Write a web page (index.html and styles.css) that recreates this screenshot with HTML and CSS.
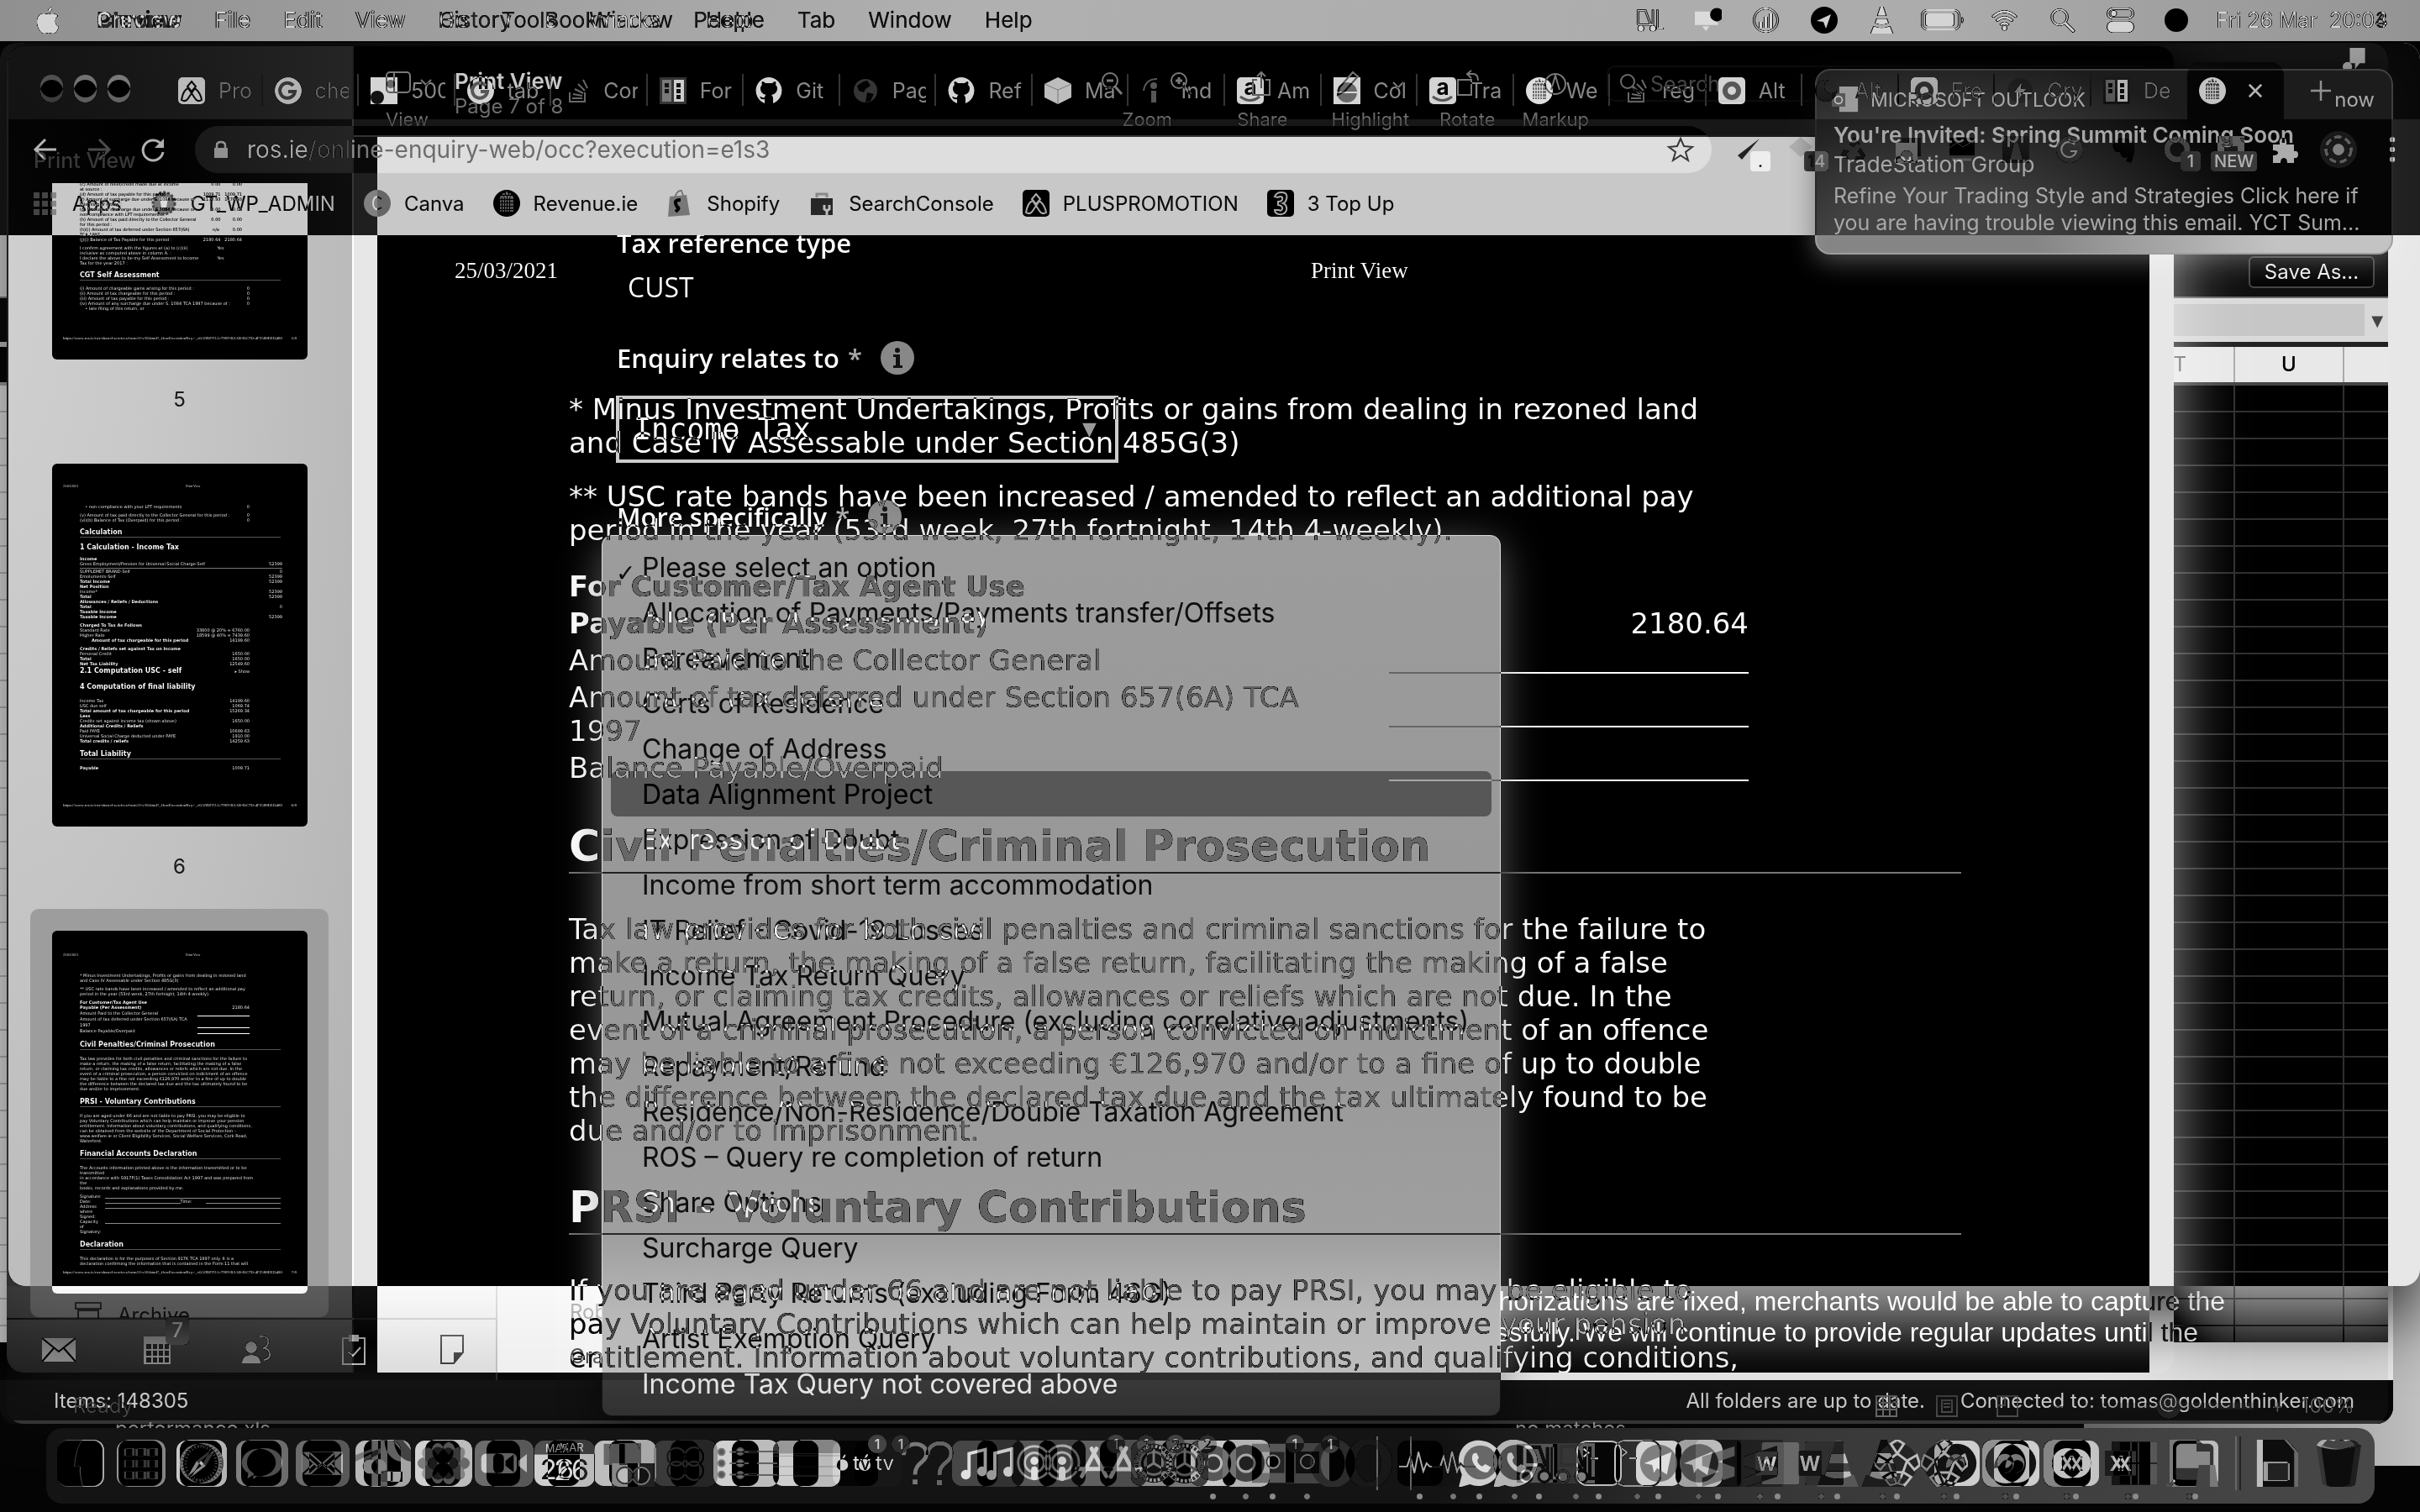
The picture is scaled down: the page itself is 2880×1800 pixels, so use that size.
FILE: index.html
```html
<!DOCTYPE html>
<html lang="en">
<head>
<meta charset="utf-8">
<title>Desktop</title>
<link rel="stylesheet" href="styles.css">
</head>
<body>
<svg class="defs" aria-hidden="true">
  <symbol id="finder" viewBox="0 0 56 56"><rect width="56" height="56" rx="12" fill="#888"/><path d="M30 0h14a12 12 0 0 1 12 12v32a12 12 0 0 1-12 12H31q-4-14-3-24h-7Q22 12 30 0z" fill="#ddd"/></symbol>
  <symbol id="launch" viewBox="0 0 56 56"><rect width="56" height="56" rx="12" fill="#b8b8b8"/><g fill="#777"><path d="M9 10h10v9H9zM23 10h10v9H23zM37 10h10v9H37zM9 38h10v9H9zM23 38h10v9H23zM37 38h10v9H37z"/></g><path d="M9 24h10v9H9zM23 24h10v9H23zM37 24h10v9H37z" fill="#eee"/></symbol>
  <symbol id="safari" viewBox="0 0 56 56"><rect width="56" height="56" rx="12" fill="#e8e8e8"/><circle cx="28" cy="28" r="24" fill="#777"/><circle cx="28" cy="28" r="21" fill="none" stroke="#ccc" stroke-width="3" stroke-dasharray="1 3"/><path d="M42 12 31 31l-6-6z" fill="#444"/><path d="M14 44l11-19 6 6z" fill="#fff"/></symbol>
  <symbol id="messages" viewBox="0 0 56 56"><rect width="56" height="56" rx="12" fill="#a0a0a0"/><path d="M28 10c13 0 21 8 21 17s-8 17-21 17l-8-1-6 4 1-7C10 37 7 33 7 27c0-9 8-17 21-17z" fill="#eee"/></symbol>
  <symbol id="mail" viewBox="0 0 56 56"><rect width="56" height="56" rx="12" fill="#8c8c8c"/><rect x="8" y="14" width="40" height="28" rx="4" fill="#eee"/><path d="M9 16l19 17 19-17M9 41l14-13M47 41L33 28" fill="none" stroke="#888" stroke-width="2"/></symbol>
  <symbol id="maps" viewBox="0 0 56 56"><rect width="56" height="56" rx="12" fill="#d8d8d8"/><path d="M20 0h8v56h-8zM36 0c0 14 8 24 20 26V12L46 0z" fill="#777"/><circle cx="18" cy="32" r="9" fill="#555"/><path d="M32 38h14v12H32z" fill="#333"/><path d="M0 18l20-8v6L0 26z" fill="#999"/></symbol>
  <symbol id="photos" viewBox="0 0 56 56"><rect width="56" height="56" rx="12" fill="#f0f0f0"/><g fill="#888" opacity=".8"><ellipse cx="28" cy="15" rx="8" ry="12"/><ellipse cx="28" cy="41" rx="8" ry="12"/><ellipse cx="15" cy="28" rx="12" ry="8"/><ellipse cx="41" cy="28" rx="12" ry="8"/><g transform="rotate(45 28 28)" fill="#aaa"><ellipse cx="28" cy="15" rx="8" ry="12"/><ellipse cx="28" cy="41" rx="8" ry="12"/><ellipse cx="15" cy="28" rx="12" ry="8"/><ellipse cx="41" cy="28" rx="12" ry="8"/></g></g></symbol>
  <symbol id="facetime" viewBox="0 0 56 56"><rect width="56" height="56" rx="12" fill="#8c8c8c"/><rect x="8" y="16" width="28" height="24" rx="6" fill="#eee"/><path d="M38 25l10-8v22l-10-8z" fill="#eee"/></symbol>
  <symbol id="calendar" viewBox="0 0 56 56"><path d="M12 0h32a12 12 0 0 1 12 12v5H0v-5A12 12 0 0 1 12 0z" fill="#707070"/><path d="M0 17h56v27a12 12 0 0 1-12 12H12A12 12 0 0 1 0 44z" fill="#eee"/><text x="28" y="14" text-anchor="middle" font-size="13" fill="#fff">MAR</text><text x="28" y="48" text-anchor="middle" font-size="34" fill="#111">26</text></symbol>
  <symbol id="iphoto" viewBox="0 0 56 56"><rect width="56" height="56" rx="12" fill="#ddd"/><path d="M12 4h26v26H12z" fill="#888"/><path d="M22 28h32v30H22z" fill="#555"/><circle cx="38" cy="43" r="10" fill="#222" stroke="#aaa" stroke-width="2"/></symbol>
  <symbol id="dark" viewBox="0 0 56 56"><rect width="56" height="56" rx="12" fill="#5a5a5a"/><circle cx="28" cy="20" r="11" fill="none" stroke="#333" stroke-width="2"/><circle cx="28" cy="37" r="11" fill="none" stroke="#333" stroke-width="2"/></symbol>
  <symbol id="reminders" viewBox="0 0 56 56"><rect width="56" height="56" rx="12" fill="#f0f0f0"/><g fill="#777" stroke="#999" stroke-width="2"><circle cx="10" cy="14" r="4"/><circle cx="10" cy="28" r="4"/><circle cx="10" cy="42" r="4"/><path d="M20 14h34M20 28h34M20 42h34"/></g></symbol>
  <symbol id="notes" viewBox="0 0 56 56"><rect width="56" height="56" rx="12" fill="#eee"/><path d="M12 0h32a12 12 0 0 1 12 12v4H0v-4A12 12 0 0 1 12 0z" fill="#b8b8b8"/><path d="M0 19h56M0 32h56M0 43h56" stroke="#bbb"/></symbol>
  <symbol id="tv" viewBox="0 0 56 56"><rect width="56" height="56" rx="12" fill="#1c1c1c"/><circle cx="12" cy="30" r="7" fill="#eee"/><path d="M12 22q1-5 4-5 0 4-4 5z" fill="#eee"/><text x="36" y="36" text-anchor="middle" font-size="24" fill="#fff">tv</text></symbol>
  <symbol id="ask" viewBox="0 0 56 56"><path d="M14 18C14 0 42 0 42 16c0 12-14 10-14 26" fill="none" stroke="#999" stroke-width="5"/><path d="M25 48h6v6h-6z" fill="#999"/></symbol>
  <symbol id="music" viewBox="0 0 56 56"><rect width="56" height="56" rx="12" fill="#666"/><path d="M21 42V16l20-5v26" fill="none" stroke="#fff" stroke-width="4"/><circle cx="17" cy="42" r="6" fill="#fff"/><circle cx="37" cy="38" r="6" fill="#fff"/></symbol>
  <symbol id="podcasts" viewBox="0 0 56 56"><rect width="56" height="56" rx="12" fill="#777"/><circle cx="28" cy="27" r="20" fill="none" stroke="#ddd" stroke-width="3"/><circle cx="28" cy="27" r="12" fill="none" stroke="#ddd" stroke-width="3"/><circle cx="28" cy="25" r="5" fill="#fff"/><rect x="24" y="32" width="8" height="17" rx="4" fill="#fff"/></symbol>
  <symbol id="store" viewBox="0 0 56 56"><rect width="56" height="56" rx="12" fill="#808080"/><path d="M31 10 13 44M25 10l18 34M7 35h42" stroke="#eee" stroke-width="5" stroke-linecap="round"/></symbol>
  <symbol id="gear" viewBox="0 0 56 56"><rect width="56" height="56" rx="12" fill="#aaa"/><circle cx="28" cy="28" r="24" fill="#333"/><circle cx="28" cy="28" r="21" fill="none" stroke="#bbb" stroke-width="4" stroke-dasharray="3 2"/><circle cx="28" cy="28" r="14" fill="none" stroke="#888" stroke-width="3"/><path d="M28 28V10M28 28l15 9M28 28l-15 9" stroke="#999" stroke-width="3"/></symbol>
  <symbol id="viewer" viewBox="0 0 56 56"><rect width="56" height="56" rx="10" fill="#e8e8e8"/><circle cx="28" cy="28" r="22" fill="#777"/><circle cx="28" cy="28" r="10" fill="#555" stroke="#ddd" stroke-width="3"/></symbol>
  <symbol id="board" viewBox="0 0 56 56"><path d="M2 4h52v48H2z" fill="#777"/><path d="M14 14h28v26H14z" fill="#444"/><circle cx="28" cy="26" r="8" fill="#222" stroke="#aaa" stroke-width="2"/></symbol>
  <symbol id="opera" viewBox="0 0 56 56"><ellipse cx="28" cy="28" rx="28" ry="30" fill="#4c4c4c"/><ellipse cx="28" cy="28" rx="15" ry="22" fill="#222"/></symbol>
  <symbol id="activity" viewBox="0 0 56 56"><rect width="56" height="56" rx="12" fill="#222"/><path d="M2 32h10l4-12 5 20 5-26 6 24 4-10 4 4h14" fill="none" stroke="#ccc" stroke-width="2"/></symbol>
  <symbol id="whats" viewBox="0 0 56 56"><path d="M2 58l4-16C-6 14 12-3 30 0c18 2 28 18 24 34C49 52 30 60 16 54z" fill="#eee"/><circle cx="29" cy="27" r="21" fill="#888"/><path d="M20 16c-6 10 8 25 18 23l4-6-7-4-4 3c-4-2-6-5-6-8l2-3-3-6z" fill="#fff"/></symbol>
  <symbol id="lift" viewBox="0 0 56 56"><rect y="4" width="50" height="48" fill="#777"/><path d="M8 30h22l8 12V8M10 8h18l8 24M10 8v24M44 8v38h10" fill="none" stroke="#111" stroke-width="4"/><circle cx="12" cy="44" r="7" fill="#999" stroke="#111" stroke-width="3"/><circle cx="34" cy="44" r="7" fill="#999" stroke="#111" stroke-width="3"/></symbol>
  <symbol id="term" viewBox="0 0 56 56"><rect x="1" y="1" width="54" height="54" rx="12" fill="#1a1a1a" stroke="#ddd" stroke-width="2"/><path d="M9 10l6 5-6 5M18 22h9" fill="none" stroke="#eee" stroke-width="2"/></symbol>
  <symbol id="tele" viewBox="0 0 56 56"><rect width="56" height="56" rx="12" fill="#eee"/><circle cx="28" cy="28" r="23" fill="#999"/><path d="M10 28l34-14-6 28-12-8-4 6-2-10z" fill="#fff"/></symbol>
  <symbol id="sublime" viewBox="0 0 56 56"><rect y="-2" width="56" height="60" rx="8" fill="#333"/><path d="M8 20l40-13v12L28 26l20 7v11L8 57V46l21-8L8 31z" fill="#777"/></symbol>
  <symbol id="word" viewBox="0 0 56 56"><rect x="8" y="2" width="46" height="52" rx="3" fill="#888"/><rect y="13" width="28" height="30" rx="2" fill="#444"/><text x="14" y="37" text-anchor="middle" font-size="24" font-weight="700" fill="#fff">W</text></symbol>
  <symbol id="vlc" viewBox="0 0 56 56"><path d="M2 58l6-16h40l6 16z" fill="#777"/><path d="M26-2h6l13 44q-17 8-33 0z" fill="#666"/><path d="M20 16h17l4 12H17zM14 38h29l2 5q-17 8-33 0z" fill="#ddd"/></symbol>
  <symbol id="ball" viewBox="0 0 56 56"><circle cx="28" cy="28" r="25" fill="#444"/><path d="M28 16l12 9-5 14H21l-5-14zM28 16L20 4 28-1 36 4zM40 25l12-7 4 12-7 6zM35 39l10 6-8 10-8-2zM21 39l-10 6 8 10 8-2zM16 25L4 18 0 30l7 6z" fill="none" stroke="#ddd" stroke-width="3"/></symbol>
  <symbol id="swirl" viewBox="0 0 56 56"><rect width="56" height="56" rx="12" fill="#eee"/><circle cx="28" cy="28" r="24" fill="#333"/><path d="M14 34C14 16 30 12 36 22c5 9-2 18-10 18 12-2 14-14 4-16-8-1-8 10-16 10z" fill="#aaa"/></symbol>
  <symbol id="xround" viewBox="0 0 56 56"><rect width="56" height="56" rx="12" fill="#e4e4e4"/><circle cx="28" cy="28" r="18" fill="#222"/><text x="28" y="37" text-anchor="middle" font-size="24" font-weight="700" fill="#ccc">X</text></symbol>
  <symbol id="excel" viewBox="0 0 56 56"><rect x="8" y="2" width="46" height="52" fill="#777"/><path d="M31 2v52M8 28h46" stroke="#444" stroke-width="2"/><rect y="13" width="28" height="30" fill="#444"/><text x="14" y="37" text-anchor="middle" font-size="24" font-weight="700" fill="#fff">X</text></symbol>
  <symbol id="sheet" viewBox="0 0 56 56"><path d="M4-2h32l16 16v44H4z" fill="#ddd"/><path d="M36-2v16h16z" fill="#888"/><path d="M10 48l-8 10M2 52v6h6" stroke="#111" stroke-width="3"/></symbol>
  <symbol id="preview" viewBox="0 0 56 56"><rect width="56" height="56" rx="8" fill="#ddd"/><rect x="4" y="4" width="46" height="44" rx="6" fill="#555"/><path d="M4 34h46v14H4z" fill="#aaa"/><path d="M32 30h20l4 28H28z" fill="#999"/></symbol>
  <symbol id="doc" viewBox="0 0 56 56"><path d="M4-3h32l14 16v46H4z" fill="#ddd"/><path d="M12 26h30v24H12z" fill="#333"/></symbol>
  <symbol id="doc-dim" viewBox="0 0 56 56"><path d="M8-1h28l14 16v44H8z" fill="#d0d0d0"/><path d="M14 28h26v20H14z" fill="#555"/></symbol>
  <symbol id="bin" viewBox="0 0 56 56"><path d="M4 6h48l-7 48q-17 8-34 0z" fill="#555"/><path d="M4 6q6-10 14-6 8-6 16 0 12-4 18 6-24 10-48 0z" fill="#ccc"/></symbol>
  <symbol id="bin-dim" viewBox="0 0 56 56"><path d="M4 6h48l-7 48q-17 8-34 0z" fill="#484848"/><path d="M6 7q5-10 13-5 8-6 14 0 12-4 17 5-22 8-44 0z" fill="#888"/></symbol>

  <symbol id="apple" viewBox="0 0 26 32"><path d="M18 8c3 0 5 1 7 3-5 3-4 11 1 13-2 5-4 8-7 8-2 0-3-1-5-1s-3 1-5 1c-5 0-9-8-9-14 0-7 4-10 8-10 2 0 4 1 6 1 1 0 2-1 4-1zM18 0c0 4-2 6-5 7 0-4 2-6 5-7z"/></symbol>
  <symbol id="wifi" viewBox="0 0 34 26"><path d="M2 9q15-14 30 0M7 14q10-9 20 0M12 19q5-5 10 0" fill="none" stroke="currentColor" stroke-width="3"/><circle cx="17" cy="23" r="3"/></symbol>
  <symbol id="search" viewBox="0 0 28 28"><circle cx="11" cy="11" r="8" fill="none" stroke="currentColor" stroke-width="2"/><path d="M17 17l9 9" stroke="currentColor" stroke-width="3"/></symbol>
  <symbol id="toggles" viewBox="0 0 28 28"><rect x="1" y="2" width="26" height="10" rx="5" fill="none" stroke="currentColor" stroke-width="2"/><circle cx="7" cy="7" r="3"/><rect y="15" width="28" height="12" rx="6"/></symbol>
  <symbol id="battery" viewBox="0 0 52 26"><rect x="1" y="1" width="44" height="23" rx="6" fill="none" stroke="currentColor" stroke-width="2"/><rect x="5" y="5" width="34" height="15" rx="3"/><path d="M48 9q4 3 0 8z"/></symbol>
  <symbol id="cone" viewBox="0 0 32 36"><path d="M14 0h4l4 12H10zM9 16h14l2 6q-9 4-18 0zM5 26q11 5 22 0l4 10H1z"/></symbol>
  <symbol id="bars" viewBox="0 0 32 32"><circle cx="16" cy="16" r="14" fill="none" stroke="currentColor" stroke-width="2"/><path d="M8 18h4v7H8zM14 12h4v13h-4zM20 8h4v17h-4z"/></symbol>
  <symbol id="plane" viewBox="0 0 32 32"><circle cx="16" cy="16" r="16" fill="#242424"/><path d="M7 17l17-8-6 17-3-8z" fill="#f4f4f4"/></symbol>
  <symbol id="truck" viewBox="0 0 36 32"><path d="M2 22V3h10l7 19M2 22h20V2M28 2v25h8" fill="none" stroke="currentColor" stroke-width="2"/><circle cx="6" cy="27" r="4"/><circle cx="22" cy="27" r="4"/></symbol>
  <symbol id="bell" viewBox="0 0 44 36"><path d="M0 4h24q2 16 14 18v4H0zM12 28h12l-6 8z" fill="#fff"/><circle cx="36" cy="9" r="11" fill="#242424"/></symbol>

  <symbol id="g" viewBox="0 0 32 32"><circle cx="16" cy="16" r="16" fill="#f4f4f4"/><path d="M22 10a9 9 0 1 0 2 7h-8" fill="none" stroke="#777" stroke-width="4"/></symbol>
  <symbol id="aframe" viewBox="0 0 32 32"><rect width="32" height="32" rx="5" fill="#f4f4f4"/><path d="M16 5l5 6-5 6-5-6zM4 27q2-12 8-14l8 12q3 5 8 2-1-8-8-14l-8 12q-3 5-8 2z" fill="none" stroke="#444" stroke-width="2"/></symbol>
  <symbol id="pic" viewBox="0 0 32 32"><rect width="32" height="32" fill="#f4f4f4"/><circle cx="8" cy="24" r="8" fill="#333"/><circle cx="24" cy="8" r="5" fill="#888"/></symbol>
  <symbol id="stack" viewBox="0 0 32 32"><path d="M8 18v11h18V18M11 25h12M12 20l11 2M14 14l10 5M18 8l8 8M24 3l5 10" fill="none" stroke="#888" stroke-width="2"/></symbol>
  <symbol id="cells" viewBox="0 0 32 32"><rect width="32" height="32" fill="#555"/><path d="M3 3h11v26H3z" fill="#999"/><path d="M17 3h12v26H17z" fill="#eee"/><path d="M20 7h5v5h-5zM20 14h5v5h-5zM20 21h5v5h-5zM6 7h5v5H6zM6 14h5v5H6z" fill="#333"/></symbol>
  <symbol id="cat" viewBox="0 0 32 32"><path d="M16 0a16 16 0 0 0-5 31v-5c-4 1-5-1-6-3 3 0 3 2 6 1 0-2 1-3 2-3-5-1-7-4-7-8 0-2 1-3 2-4-1-2 0-4 0-4 2 0 4 2 4 2h8s2-2 4-2c0 0 1 2 0 4 1 1 2 2 2 4 0 4-2 7-7 8 1 1 2 2 2 4v6A16 16 0 0 0 16 0z" fill="#f4f4f4"/></symbol>
  <symbol id="globe" viewBox="0 0 32 32"><circle cx="16" cy="16" r="14" fill="#555"/><path d="M6 10q8-6 12-6l4 6-6 4-2 4-6-2zM18 18l8 2-4 8-6 2z" fill="#222"/></symbol>
  <symbol id="cube" viewBox="0 0 32 32"><path d="M16 0l16 8v16l-16 8L0 24V8z" fill="#ddd"/><path d="M0 8l16 7 16-7M16 15v17" fill="none" stroke="#999"/></symbol>
  <symbol id="ind" viewBox="0 0 32 32"><circle cx="16" cy="10" r="4" fill="#777"/><path d="M13 16h6v14h-6z" fill="#777"/><path d="M4 16Q6 2 20 2" fill="none" stroke="#777" stroke-width="2"/></symbol>
  <symbol id="amazon" viewBox="0 0 32 32"><rect width="32" height="32" rx="5" fill="#f4f4f4"/><text x="16" y="21" text-anchor="middle" font-size="26" font-weight="700" fill="#222">a</text><path d="M4 23q12 9 23 0" fill="none" stroke="#777" stroke-width="3"/></symbol>
  <symbol id="globe2" viewBox="0 0 32 32"><rect width="32" height="32" fill="#f4f4f4"/><circle cx="16" cy="18" r="12" fill="#888"/><path d="M4 18h24" stroke="#f4f4f4" stroke-width="2"/></symbol>
  <symbol id="harp" viewBox="0 0 32 32"><circle cx="16" cy="16" r="16" fill="#fff"/><path d="M9 8h14M11 5h10M16 2v4M9 8v18M12 8v18M15 8v18M18 8v18M21 8v18M23 8v18" stroke="#222" stroke-dasharray="3 1"/></symbol>
  <symbol id="ring" viewBox="0 0 32 32"><rect width="32" height="32" rx="5" fill="#f4f4f4"/><circle cx="16" cy="16" r="8" fill="none" stroke="#777" stroke-width="6"/></symbol>
  <symbol id="moon" viewBox="0 0 32 32"><circle cx="14" cy="16" r="13" fill="#666"/><circle cx="20" cy="11" r="8" fill="#222"/></symbol>
  <symbol id="bolt" viewBox="0 0 32 32"><circle cx="16" cy="16" r="15" fill="#2a2a2a"/><path d="M18 6l-9 12h6l-1 9 9-13h-6z" fill="#bbb"/></symbol>
  <symbol id="info" viewBox="0 0 40 40"><circle cx="20" cy="20" r="20" fill="#777"/><circle cx="20" cy="11" r="3" fill="#eee"/><path d="M15 16h8v13h3v3H15v-3h3V19h-3z" fill="#eee"/></symbol>
</svg>

<main class="stage">
  <!-- browser and mail session -->
  <section class="screen screen-one">
    <div class="paper-edge"></div>
    <div class="mail">
      <div class="mail-main">
        <div class="mail-side">
          <div class="folder"><svg viewBox="0 0 30 24"><path d="M0 0h30v7H0zM3 9h24v15H3z" fill="none" stroke="#777" stroke-width="2"/></svg>Archive</div>
          <nav class="mail-nav">
            <svg viewBox="0 0 40 40"><path d="M0 6h40v28H0z" fill="#d8d8d8"/><path d="M0 6l20 16L40 6M0 34l14-16M40 34L26 18" fill="none" stroke="#444" stroke-width="2"/></svg>
            <span class="with-badge"><svg viewBox="0 0 40 40"><path d="M4 4h32v33H4z" fill="#d8d8d8"/><path d="M7 13h6v6H7zM15 13h5v6h-5zM22 13h5v6h-5zM29 13h5v6h-5zM7 21h6v6H7zM15 21h5v6h-5zM22 21h5v6h-5zM29 21h5v6h-5zM7 29h6v6H7zM15 29h5v6h-5zM22 29h5v6h-5zM29 29h5v6h-5z" fill="#333"/></svg><b>7</b></span>
            <svg viewBox="0 0 40 40"><circle cx="15" cy="17" r="7" fill="#d8d8d8"/><path d="M4 36q0-10 11-10t11 10z" fill="#d8d8d8"/><path d="M25 4q12-1 10 8-1 5-6 6 8 0 8 8 0 5-7 6" fill="none" stroke="#d8d8d8" stroke-width="2"/></svg>
            <svg viewBox="0 0 40 40"><path d="M7 6h26v31H7z" fill="none" stroke="#d8d8d8" stroke-width="2"/><path d="M14 2h12v8H14z" fill="#d8d8d8"/><path d="M13 22l6 5 9-10" fill="none" stroke="#d8d8d8" stroke-width="2"/></svg>
            <svg viewBox="0 0 40 40"><path d="M7 3h26v20L22 36H7z" fill="none" stroke="#ccc" stroke-width="2"/><path d="M22 36V23h11z" fill="#ccc"/></svg>
          </nav>
        </div>
        <div class="mail-list"><p>Robert</p><p>Gra</p></div>
        <article class="mail-body">
          <p>Once card authorizations are fixed, merchants would be able to capture the</p>
          <p>payments successfully. We will continue to provide regular updates until the</p>
        </article>
      </div>
      <footer class="mail-status"><span>Items: 148305</span><span class="push">All folders are up to date.</span><span>Connected to: tomas@goldenthinker.com</span></footer>
    </div>
    <div class="peek"><span class="peek-file">performance.xls</span><span>no matches</span></div>

    <div class="chrome">
      <div class="tabstrip">
        <div class="lights"><i></i><i></i><i></i></div>
        <div class="tabs">
          <div class="tab"><svg><use href="#aframe"/></svg><span>Pro</span></div>
          <div class="tab"><svg><use href="#g"/></svg><span>che</span></div>
          <div class="tab"><svg><use href="#pic"/></svg><span>500</span></div>
          <div class="tab"><svg><use href="#g"/></svg><span>tab</span></div>
          <div class="tab"><svg><use href="#stack"/></svg><span>Cor</span></div>
          <div class="tab"><svg><use href="#cells"/></svg><span>For</span></div>
          <div class="tab"><svg><use href="#cat"/></svg><span>Git</span></div>
          <div class="tab"><svg><use href="#globe"/></svg><span>Pag</span></div>
          <div class="tab"><svg><use href="#cat"/></svg><span>Ref</span></div>
          <div class="tab"><svg><use href="#cube"/></svg><span>Ma</span></div>
          <div class="tab"><svg><use href="#ind"/></svg><span>Ind</span></div>
          <div class="tab"><svg><use href="#amazon"/></svg><span>Am</span></div>
          <div class="tab"><svg><use href="#globe2"/></svg><span>Col</span></div>
          <div class="tab"><svg><use href="#amazon"/></svg><span>Tra</span></div>
          <div class="tab"><svg><use href="#harp"/></svg><span>We</span></div>
          <div class="tab"><svg><use href="#stack"/></svg><span>reg</span></div>
          <div class="tab"><svg><use href="#ring"/></svg><span>Alt</span></div>
          <div class="tab"><svg><use href="#moon"/></svg><span>Alt</span></div>
          <div class="tab"><svg><use href="#ring"/></svg><span>Fre</span></div>
          <div class="tab"><svg><use href="#bolt"/></svg><span>Cry</span></div>
          <div class="tab"><svg><use href="#cells"/></svg><span>De</span></div>
          <div class="tab active"><svg><use href="#harp"/></svg><button aria-label="Close tab"><svg viewBox="0 0 20 20"><path d="M2 2l16 16M18 2L2 18" stroke="#eee" stroke-width="3"/></svg></button></div>
        </div>
        <button class="newtab" aria-label="New tab"><svg viewBox="0 0 24 24"><path d="M12 0v24M0 12h24" stroke="#ccc" stroke-width="3"/></svg></button>
      </div>
      <div class="toolbar">
        <button aria-label="Back"><svg viewBox="0 0 28 28"><path d="M27 14H3M14 2L2 14l12 12" fill="none" stroke="#e8e8e8" stroke-width="3"/></svg></button>
        <button aria-label="Forward"><svg viewBox="0 0 28 28"><path d="M1 14h24M14 2l12 12-12 12" fill="none" stroke="#808080" stroke-width="3"/></svg></button>
        <button aria-label="Reload"><svg viewBox="0 0 28 28"><path d="M24 8A12 12 0 1 0 26 17" fill="none" stroke="#e8e8e8" stroke-width="3"/><path d="M27 1v11H16z" fill="#e8e8e8"/></svg></button>
        <div class="omnibox">
          <svg class="lock" viewBox="0 0 18 22"><path d="M1 9h16v12H1z" fill="#ccc"/><path d="M4 9V6q0-4 5-4t5 4v3" fill="none" stroke="#ccc" stroke-width="3"/></svg>
          <span class="url"><b>ros.ie</b>/online-enquiry-web/occ?execution=e1s3</span>
          <svg class="star" viewBox="0 0 30 30"><path d="M15 2l4 9 10 1-8 6 3 10-9-6-9 6 3-10-8-6 10-1z" fill="none" stroke="#c8c8c8" stroke-width="2"/></svg>
        </div>
        <div class="extensions">
          <span><svg viewBox="0 0 32 32"><path d="M31 3L10 28l-5-5z" fill="#ddd"/></svg><b class="low">.</b></span>
          <span><svg viewBox="0 0 32 32"><path d="M16 1l14 12-14 12L2 13z" fill="#505050"/></svg><b class="blk">14</b></span>
          <span><svg viewBox="0 0 32 32"><path d="M10 10l6-9 7 9-5-1-3 4zM3 16l7 2-4 3 3 6H3l-3-5zM23 14l6 9-3 5h-9l1-4h6l-4-6z" fill="#777"/></svg></span>
          <span><svg viewBox="0 0 32 32"><path d="M8 2h23v22H8z" fill="#777"/><path d="M1 8h26v24H1z" fill="#ccc"/><circle cx="14" cy="24" r="7" fill="#222"/></svg></span>
          <span><svg viewBox="0 0 32 32"><path d="M1 2h30v21H1z" fill="#666"/><path d="M1 14l9-6 7 5 14-8" fill="none" stroke="#999"/><path d="M4 28h23" stroke="#111" stroke-width="3"/></svg></span>
          <span><svg viewBox="0 0 32 32"><path d="M0 0h32v32H0z" fill="#777"/><path d="M14 8h5l5 20H9z" fill="#333"/></svg></span>
          <span><svg viewBox="0 0 32 32"><circle cx="16" cy="16" r="16" fill="#888"/><path d="M22 10a9 9 0 1 0 2 8h-7" fill="none" stroke="#ddd" stroke-width="2"/></svg></span>
          <span><svg viewBox="0 0 32 32"><path d="M3 10l8-8q14 0 18 8 1 12-4 22l-6-2 2-5q-8 3-9-6-8 2-9-9z" fill="#555"/></svg></span>
          <span><svg viewBox="0 0 32 32"><circle cx="16" cy="16" r="12" fill="none" stroke="#888" stroke-width="7"/></svg><b>1</b></span>
          <span><svg viewBox="0 0 32 32"><path d="M0 0h32v26H0z" fill="#999"/><path d="M8 12h16v14H8z" fill="#555"/></svg><b class="wide">NEW</b></span>
          <span><svg viewBox="0 0 32 32"><path d="M2 10h8q-1-8 4-8t4 8h9v8q5-1 5 4t-5 4v6h-8q0-6-4-6t-4 6H2v-9q6 0 6-3t-6-3z" fill="#e8e8e8"/></svg></span>
          <span><svg viewBox="0 0 44 44" class="avatar"><circle cx="22" cy="22" r="22" fill="#222"/><circle cx="22" cy="22" r="15" fill="none" stroke="#999" stroke-width="4" stroke-dasharray="9 4"/><circle cx="22" cy="22" r="7" fill="#bbb"/></svg></span>
          <span class="dots"><svg viewBox="0 0 8 30"><circle cx="4" cy="4" r="3" fill="#ddd"/><circle cx="4" cy="15" r="3" fill="#ddd"/><circle cx="4" cy="26" r="3" fill="#ddd"/></svg></span>
        </div>
      </div>
      <nav class="bookmarks">
        <a href="#"><svg viewBox="0 0 32 32"><path d="M2 3h7v7H2zM12 3h7v7h-7zM22 3h7v7h-7zM2 13h7v7H2zM12 13h7v7h-7zM22 13h7v7h-7zM2 23h7v7H2zM12 23h7v7h-7zM22 23h7v7h-7z" fill="#777"/></svg>Apps</a>
        <a href="#"><svg viewBox="0 0 32 32"><circle cx="16" cy="16" r="13" fill="#888" stroke="#bbb" stroke-width="3" stroke-dasharray="3 2"/><path d="M11 9h10l-2 12h-6z" fill="#222"/></svg>GT_WP_ADMIN</a>
        <a href="#"><svg viewBox="0 0 32 32"><circle cx="16" cy="16" r="16" fill="#999"/><path d="M21 11q-9-7-10 5 1 11 10 5" fill="none" stroke="#eee" stroke-width="2"/></svg>Canva</a>
        <a href="#"><svg viewBox="0 0 32 32"><circle cx="16" cy="16" r="16" fill="#fff"/><path d="M9 8h14M11 5h10M16 2v4M9 8v18M12 8v18M15 8v18M18 8v18M21 8v18M23 8v18" stroke="#555" stroke-dasharray="3 1"/></svg>Revenue.ie</a>
        <a href="#"><svg viewBox="0 0 32 32"><path d="M4 8l20-2 4 24-26 2z" fill="#888"/><path d="M10 9q3-9 8-8l2 6" fill="none" stroke="#888" stroke-width="2"/><path d="M17 12q-7 0-6 4t3 5-3 5" fill="none" stroke="#fff" stroke-width="4"/></svg>Shopify</a>
        <a href="#"><svg viewBox="0 0 32 32"><path d="M3 10h26v20H3z" fill="#d8d8d8"/><path d="M10 9V5h12v4" fill="none" stroke="#777" stroke-width="3"/><path d="M19 18v5l3 2 3-2v-5M22 25v6" fill="none" stroke="#444" stroke-width="3"/></svg>SearchConsole</a>
        <a href="#"><svg viewBox="0 0 32 32"><rect width="32" height="32" rx="5" fill="#fff"/><path d="M16 5l5 6-5 6-5-6zM4 27q2-12 8-14l8 12q3 5 8 2-1-8-8-14l-8 12q-3 5-8 2z" fill="none" stroke="#555" stroke-width="2"/></svg>PLUSPROMOTION</a>
        <a href="#"><svg viewBox="0 0 32 32"><rect width="32" height="32" rx="5" fill="#fff"/><path d="M9 8q2-5 8-5 8 0 6 8-1 4-4 5 5 2 4 8-2 6-9 5-5-1-5-5h5q2 2 4-1 1-4-5-5v-4q6 0 5-5-2-2-5 0z" fill="none" stroke="#555" stroke-width="2"/></svg>3 Top Up</a>
      </nav>
      <form class="webform">
        <div class="label">Tax reference type</div>
        <div class="value">CUST</div>
        <label for="relates">Enquiry relates to <em>*</em><svg><use href="#info"/></svg></label>
        <div class="picker"><select id="relates"><option>Income Tax</option></select></div>
        <label class="second">More specifically <em>*</em><svg><use href="#info"/></svg></label>
      </form>
    </div>

    <ul class="popup">
      <li><button><i>✓</i>Please select an option</button></li>
      <li><button>Allocation of Payments/Payments transfer/Offsets</button></li>
      <li><button>Bereavement</button></li>
      <li><button>Certs of Residence</button></li>
      <li><button>Change of Address</button></li>
      <li><button class="on">Data Alignment Project</button></li>
      <li><button>Expression of Doubt</button></li>
      <li><button>Income from short term accommodation</button></li>
      <li><button>IT Relief - Covid-19 Losses</button></li>
      <li><button>Income Tax Return Query</button></li>
      <li><button>Mutual Agreement Procedure (excluding correlative adjustments)</button></li>
      <li><button>Repayment/Refund</button></li>
      <li><button>Residence/Non-Residence/Double Taxation Agreement</button></li>
      <li><button>ROS – Query re completion of return</button></li>
      <li><button>Share Options</button></li>
      <li><button>Surcharge Query</button></li>
      <li><button>Third Party Returns (excluding Form 46G)</button></li>
      <li><button>Artist Exemption Query</button></li>
      <li><button>Income Tax Query not covered above</button></li>
    </ul>

    <header class="menubar light-text">
      <svg class="mark"><use href="#apple"/></svg>
      <b>Chrome</b><span>File</span><span>Edit</span><span>View</span><span>History</span><span>Bookmarks</span><span>People</span><span>Tab</span><span>Window</span><span>Help</span>
      <div class="tray"><svg><use href="#truck"/></svg><svg></svg><svg><use href="#bars"/></svg><svg></svg><svg><use href="#cone"/></svg><svg class="batt"><use href="#battery"/></svg><svg><use href="#wifi"/></svg><svg><use href="#search"/></svg><svg><use href="#toggles"/></svg><i class="orb"></i><time>Fri 26 Mar&nbsp; 20:04</time></div>
    </header>

    <div class="dock dock-one">
      <svg><use href="#finder"/></svg><svg><use href="#launch"/></svg><svg><use href="#safari"/></svg><svg><use href="#messages"/></svg><svg><use href="#mail"/></svg><svg><use href="#maps"/></svg><svg><use href="#photos"/></svg><svg><use href="#facetime"/></svg><svg><use href="#calendar"/></svg><svg><use href="#iphoto"/></svg><svg><use href="#dark"/></svg><svg><use href="#reminders"/></svg><svg><use href="#notes"/></svg><span class="app"><svg><use href="#tv"/></svg><b>1</b></span><svg><use href="#ask"/></svg><svg><use href="#music"/></svg><svg><use href="#podcasts"/></svg><span class="app"><svg><use href="#store"/></svg><b>1</b></span><span class="app"><svg><use href="#gear"/></svg><b>2</b></span><span class="app run"><svg><use href="#viewer"/></svg></span><span class="app run"><svg><use href="#board"/></svg><b>1</b></span><svg><use href="#opera"/></svg>
      <hr>
      <span class="app run"><svg><use href="#activity"/></svg></span><span class="app run"><svg><use href="#whats"/></svg></span><span class="app run"><svg><use href="#lift"/></svg></span><span class="app run"><svg><use href="#term"/></svg></span><span class="app run"><svg><use href="#tele"/></svg></span><span class="app run"><svg><use href="#sublime"/></svg></span><span class="app run"><svg><use href="#word"/></svg></span><span class="app run"><svg><use href="#vlc"/></svg></span><span class="app run"><svg><use href="#ball"/></svg></span><span class="app run"><svg><use href="#swirl"/></svg></span><span class="app run"><svg><use href="#swirl"/></svg></span><span class="app run"><svg><use href="#xround"/></svg></span><span class="app run"><svg><use href="#excel"/></svg></span><span class="app run"><svg><use href="#preview"/></svg></span>
      <hr class="end">
      <svg><use href="#doc"/></svg><svg><use href="#bin"/></svg>
    </div>
  </section>

  <!-- document viewer and spreadsheet session -->
  <section class="screen screen-two">
    <div class="excel">
      <div class="excel-title"><svg viewBox="0 0 40 40"><path d="M12 0h26v26h-9l-8 10V26h-9z" fill="#bbb"/><circle cx="8" cy="32" r="8" fill="#bbb"/></svg></div>
      <div class="notice"><button>Save As...</button></div>
      <div class="formula"><div></div><span>▼</span></div>
      <div class="heads"><span>T</span><span>U</span><span></span></div>
      <div class="grid"><i></i><i></i><i></i></div>
      <div class="below"></div>
      <footer class="excel-status"><span>Ready</span><span class="view-icons"><svg viewBox="0 0 28 28"><path d="M2 2h24v24H2zM2 10h24M2 18h24M10 2v24M18 2v24" fill="none" stroke="#999" stroke-width="2"/></svg><svg viewBox="0 0 28 28"><path d="M2 2h24v24H2zM8 7h12v14H8zM10 11h8M10 15h8" fill="none" stroke="#777" stroke-width="2"/></svg><svg viewBox="0 0 28 28"><path d="M2 2h24v24H2zM11 2v11H2" fill="none" stroke="#777" stroke-width="2"/></svg></span><i class="minus">−</i><input type="range" aria-label="Zoom" value="50"><i>+</i><span>100%</span></footer>
    </div>

    <div class="viewer">
      <aside class="thumbs">
        <div class="lights"><i></i><i></i><i></i></div>
        <h2>Print View</h2>
        <div class="strip">
          <figure>
            <div class="thumb t5">
              <p class="row n"><span>(c) Amount of relief/credit made due at income<br>at source :</span><b>0.00</b><b>0.00</b></p>
              <p class="row n"><span>(d) Amount of tax payable for this period :</span><b>1009.71</b><b>1009.71</b></p>
              <p class="row n"><span>(f) Amount of surcharge due under S. 1084 because of<br>late filing of return :</span><b>1170.93</b><b>1170.93</b></p>
              <p class="row n"><span>(g) Amount of surcharge due under S.1084 because of<br>non-compliance with LPT requirements :</span><b>0.00</b><b>0.00</b></p>
              <p class="row n"><span>(h) Amount of tax paid directly to the Collector General<br>for this period :</span><b>0.00</b><b>0.00</b></p>
              <p class="row n"><span>(h)(i) Amount of tax deferred under Section 657(6A)<br>TCA 1997 :</span><b>n/a</b><b>0.00</b></p>
              <p class="row n"><span>(j)(i) Balance of Tax Payable for this period :</span><b>2180.64</b><b>2180.64</b></p>
              <p class="row n gap"><span>I confirm agreement with the figures at (a) to (c)(ii)<br>inclusive as computed above in column A. :</span><b>Yes</b><b></b></p>
              <p class="row n"><span>I declare the above to be my Self Assessment to Income<br>Tax for the year 2017 :</span><b>Yes</b><b></b></p>
              <h3 class="ruled">CGT Self Assessment</h3>
              <p class="row m"><span>(i) Amount of chargeable gains arising for this period :</span><b>0</b></p>
              <p class="row m"><span>(ii) Amount of tax chargeable for this period :</span><b>0</b></p>
              <p class="row m"><span>(iii) Amount of tax payable for this period :</span><b>0</b></p>
              <p class="row m"><span>(iv) Amount of any surcharge due under S. 1084 TCA 1997 because of :<br>&nbsp; &nbsp; • late filing of this return, or</span><b>0</b></p>
              <p class="foot"><span>https://www.ros.ie/ros-shared-services/form11-v18.html?_flowExecutionKey=_c6A9DFF2A-7909-B2AB-DC7D-4F2588EED480</span><span>5/8</span></p>
            </div>
            <figcaption>5</figcaption>
          </figure>
          <figure>
            <div class="thumb">
              <p class="top"><span>25/03/2021</span><span>Print View</span></p>
              <p class="row m"><span>&nbsp; &nbsp; • non-compliance with your LPT requirements</span><b>0</b></p>
              <p class="row m gap"><span>(v) Amount of tax paid directly to the Collector General for this period :</span><b>0</b></p>
              <p class="row m"><span>(vi)(b) Balance of Tax (Overpaid) for this period :</span><b>0</b></p>
              <h3 class="ruled">Calculation</h3>
              <h3>1 Calculation - Income Tax</h3>
              <p class="row w"><strong>Income</strong></p>
              <p class="row w"><span>Gross Employment/Pension for Universal Social Charge-Self</span><b>52399</b></p>
              <p class="row w line"><span>SUPPLEMET BRAND-Self</span><b>0</b></p>
              <p class="row w"><span>Emoluments-Self</span><b>52399</b></p>
              <p class="row w"><strong>Total Income</strong><b>52399</b></p>
              <p class="row w"><strong>Net Position</strong></p>
              <p class="row w"><span>Income*</span><b>52399</b></p>
              <p class="row w"><strong>Total</strong><b>52399</b></p>
              <p class="row w"><strong>Allowances / Reliefs / Deductions</strong></p>
              <p class="row w"><strong>Total</strong><b>0</b></p>
              <p class="row w"><strong>Taxable Income</strong></p>
              <p class="row w"><strong>Taxable Income</strong><b>52399</b></p>
              <p class="row m gap"><strong>Charged To Tax As Follows</strong></p>
              <p class="row m"><span>Standard Rate</span><b>33800 @ 20% = 6760.00</b></p>
              <p class="row m"><span>Higher Rate</span><b>18599 @ 40% = 7439.60</b></p>
              <p class="row m"><strong>&nbsp; &nbsp; &nbsp; &nbsp; Amount of tax chargeable for this period</strong><b>14199.60</b></p>
              <p class="row m gap"><strong>Credits / Reliefs set against Tax on Income</strong></p>
              <p class="row m"><span>Personal Credit</span><b>1650.00</b></p>
              <p class="row m"><strong>Total</strong><b>1650.00</b></p>
              <p class="row m"><strong>Net Tax Liability</strong><b>12549.60</b></p>
              <h3 class="row m tight">2.1 Computation USC - self<b>▸ Show</b></h3>
              <h3 class="roomy">4 Computation of final liability</h3>
              <p class="row m"><span>Income Tax</span><b>14199.60</b></p>
              <p class="row m"><span>USC due self</span><b>1069.74</b></p>
              <p class="row m"><strong>Total amount of tax chargeable for this period</strong><b>15269.34</b></p>
              <p class="row m"><strong>Less</strong></p>
              <p class="row m"><span>Credits set against income tax (shown above)</span><b>1650.00</b></p>
              <p class="row m"><strong>Additional Credits / Reliefs</strong></p>
              <p class="row m"><span>Paid PAYE</span><b>10699.63</b></p>
              <p class="row m"><span>Universal Social Charge deducted under PAYE</span><b>1910.00</b></p>
              <p class="row m"><strong>Total credits / reliefs</strong><b>14259.63</b></p>
              <h3 class="ruled roomy">Total Liability</h3>
              <p class="row m"><strong>Payable</strong><b>1009.71</b></p>
              <p class="foot"><span>https://www.ros.ie/ros-shared-services/form11-v18.html?_flowExecutionKey=_c6A9DFF2A-7909-B2AB-DC7D-4F2588EED480</span><span>6/8</span></p>
            </div>
            <figcaption>6</figcaption>
          </figure>
          <figure class="selected">
            <div class="thumb">
              <p class="top"><span>25/03/2021</span><span>Print View</span></p>
              <p>* Minus Investment Undertakings, Profits or gains from dealing in rezoned land<br>and Case IV Assessable under Section 485G(3)</p>
              <p class="gap">** USC rate bands have been increased / amended to reflect an additional pay<br>period in the year (53rd week, 27th fortnight, 14th 4-weekly).</p>
              <p class="gap"><strong>For Customer/Tax Agent Use</strong></p>
              <p class="row m"><strong>Payable (Per Assessment)</strong><b>2180.64</b></p>
              <p class="row m"><span>Amount Paid to the Collector General</span><u></u></p>
              <p class="row m"><span>Amount of tax deferred under Section 657(6A) TCA<br>1997</span><u></u></p>
              <p class="row m"><span>Balance Payable/Overpaid</span><u></u></p>
              <h3 class="ruled">Civil Penalties/Criminal Prosecution</h3>
              <p>Tax law provides for both civil penalties and criminal sanctions for the failure to<br>make a return, the making of a false return, facilitating the making of a false<br>return, or claiming tax credits, allowances or reliefs which are not due. In the<br>event of a criminal prosecution, a person convicted on indictment of an offence<br>may be liable to a fine not exceeding €126,970 and/or to a fine of up to double<br>the difference between the declared tax due and the tax ultimately found to be<br>due and/or to imprisonment.</p>
              <h3 class="ruled">PRSI - Voluntary Contributions</h3>
              <p>If you are aged under 66 and are not liable to pay PRSI, you may be eligible to<br>pay Voluntary Contributions which can help maintain or improve your pension<br>entitlement. Information about voluntary contributions, and qualifying conditions,<br>can be obtained from the website of the Department of Social Protection –<br>www.welfare.ie or Client Eligibility Services, Social Welfare Services, Cork Road,<br>Waterford.</p>
              <h3 class="ruled">Financial Accounts Declaration</h3>
              <p>The Accounts information printed above is the information transmitted or to be<br>transmitted<br>in accordance with S917F(1) Taxes Consolidation Act 1997 and was prepared from<br>the<br>books, records and explanations provided by me.</p>
              <p class="sign gap"><span>Signature:</span><u></u></p>
              <p class="sign"><span>Date:</span><u></u><span>Time:</span><u></u></p>
              <p class="sign"><span>Address<br>where<br>Signed:</span><u></u></p>
              <p class="sign"><span>Capacity<br>of<br>Signatory:</span><u></u></p>
              <h3 class="ruled">Declaration</h3>
              <p>This declaration is for the purposes of Section 917K TCA 1997 only. It is a<br>declaration confirming the information that is contained in the Form 11 that will</p>
              <p class="foot"><span>https://www.ros.ie/ros-shared-services/form11-v18.html?_flowExecutionKey=_c6A9DFF2A-7909-B2AB-DC7D-4F2588EED480</span><span>7/8</span></p>
            </div>
          </figure>
        </div>
      </aside>
      <div class="viewer-main">
        <div class="viewer-bar">
          <div class="tool view"><svg viewBox="0 0 60 30"><rect x="1" y="1" width="28" height="24" rx="4" fill="none" stroke="#999" stroke-width="2"/><path d="M10 1v24M42 10l6 6 6-6" fill="none" stroke="#999" stroke-width="2"/></svg>View</div>
          <div class="title"><b>Print View</b><span>Page 7 of 8</span></div>
          <div class="tool zoom"><svg viewBox="0 0 112 30"><circle cx="12" cy="11" r="9" fill="none" stroke="#999" stroke-width="2"/><path d="M18 18l8 9M8 11h8" stroke="#999" stroke-width="3"/><circle cx="94" cy="11" r="9" fill="none" stroke="#999" stroke-width="2"/><path d="M100 18l8 9M90 11h8M94 7v8" stroke="#999" stroke-width="3"/></svg>Zoom</div>
          <div class="tool share"><svg viewBox="0 0 30 30"><path d="M9 10H4v18h20V10h-5M14 20V1M9 6l5-5 5 5" fill="none" stroke="#999" stroke-width="2"/></svg>Share</div>
          <div class="tool highlight"><svg viewBox="0 0 90 30"><path d="M24 1l6 5-16 18-8 4 2-9z" fill="none" stroke="#999" stroke-width="2"/><path d="M72 13l6 6 6-6" fill="none" stroke="#999" stroke-width="2"/></svg>Highlight</div>
          <div class="tool"><svg viewBox="0 0 30 30"><path d="M4 10h16v18H4zM16 3h6q6 0 6 8M20-1l-5 4 5 5" fill="none" stroke="#999" stroke-width="2"/></svg>Rotate</div>
          <div class="tool markup"><svg viewBox="0 0 30 30"><circle cx="15" cy="15" r="12" fill="none" stroke="#999" stroke-width="2"/><path d="M10 22l5-17 5 17" fill="none" stroke="#999" stroke-width="2"/></svg>Markup</div>
          <label class="find"><svg><use href="#search"/></svg><input type="search" placeholder="Search" aria-label="Search"></label>
        </div>
        <div class="viewer-body">
          <article class="page">
            <header><span>25/03/2021</span><span class="ptitle">Print View</span></header>
            <p>* Minus Investment Undertakings, Profits or gains from dealing in rezoned land<br>and Case IV Assessable under Section 485G(3)</p>
            <p class="para">** USC rate bands have been increased / amended to reflect an additional pay<br>period in the year (53rd week, 27th fortnight, 14th 4-weekly).</p>
            <table>
              <tr><th colspan="2">For Customer/Tax Agent Use</th></tr>
              <tr><th>Payable (Per Assessment)</th><td class="num">2180.64</td></tr>
              <tr><td>Amount Paid to the Collector General</td><td><u></u></td></tr>
              <tr><td>Amount of tax deferred under Section 657(6A) TCA<br>1997</td><td><u></u></td></tr>
              <tr><td>Balance Payable/Overpaid</td><td><u></u></td></tr>
            </table>
            <h2>Civil Penalties/Criminal Prosecution</h2>
            <p>Tax law provides for both civil penalties and criminal sanctions for the failure to<br>make a return, the making of a false return, facilitating the making of a false<br>return, or claiming tax credits, allowances or reliefs which are not due. In the<br>event of a criminal prosecution, a person convicted on indictment of an offence<br>may be liable to a fine not exceeding €126,970 and/or to a fine of up to double<br>the difference between the declared tax due and the tax ultimately found to be<br>due and/or to imprisonment.</p>
            <h2>PRSI - Voluntary Contributions</h2>
            <p>If you are aged under 66 and are not liable to pay PRSI, you may be eligible to<br>pay Voluntary Contributions which can help maintain or improve your pension<br>entitlement. Information about voluntary contributions, and qualifying conditions,</p>
          </article>
        </div>
      </div>
    </div>

    <div class="toast">
      <div class="toast-head"><svg viewBox="0 0 36 36"><path d="M10 0h25v34H10z" fill="#bbb"/><path d="M0 9h18v18H0z" fill="#777"/><circle cx="9" cy="18" r="5" fill="none" stroke="#ddd" stroke-width="2"/></svg><span>MICROSOFT OUTLOOK</span><time>now</time></div>
      <b>You're Invited: Spring Summit Coming Soon</b>
      <span>TradeStation Group</span>
      <p>Refine Your Trading Style and Strategies Click here if<br>you are having trouble viewing this email. YCT Sum...</p>
    </div>

    <header class="menubar dark-text">
      <svg class="mark"><use href="#apple"/></svg>
      <b>Preview</b><span>File</span><span>Edit</span><span>View</span><span>Go</span><span>Tools</span><span>Window</span><span>Help</span>
      <div class="tray"><svg><use href="#truck"/></svg><svg><use href="#bell"/></svg><svg><use href="#bars"/></svg><svg><use href="#plane"/></svg><svg><use href="#cone"/></svg><svg class="batt"><use href="#battery"/></svg><svg><use href="#wifi"/></svg><svg><use href="#search"/></svg><svg><use href="#toggles"/></svg><i class="orb"></i><time>Fri 26 Mar&nbsp; 20:03</time></div>
    </header>

    <div class="dock dock-two">
      <svg><use href="#finder"/></svg><svg><use href="#launch"/></svg><svg><use href="#safari"/></svg><svg><use href="#messages"/></svg><svg><use href="#mail"/></svg><svg><use href="#maps"/></svg><svg><use href="#photos"/></svg><svg><use href="#facetime"/></svg><svg><use href="#calendar"/></svg><svg><use href="#iphoto"/></svg><svg><use href="#dark"/></svg><svg><use href="#reminders"/></svg><svg><use href="#notes"/></svg><span class="app"><svg><use href="#tv"/></svg><b>1</b></span><svg><use href="#ask"/></svg><svg><use href="#music"/></svg><svg><use href="#podcasts"/></svg><span class="app"><svg><use href="#store"/></svg><b>1</b></span><span class="app"><svg><use href="#gear"/></svg><b>2</b></span><span class="app run"><svg><use href="#viewer"/></svg></span><span class="app run"><svg><use href="#board"/></svg><b>1</b></span><svg><use href="#opera"/></svg>
      <hr>
      <span class="app run"><svg><use href="#activity"/></svg></span><span class="app run"><svg><use href="#whats"/></svg></span><span class="app run"><svg><use href="#lift"/></svg></span><span class="app run"><svg><use href="#term"/></svg></span><span class="app run"><svg><use href="#tele"/></svg></span><span class="app run"><svg><use href="#sublime"/></svg></span><span class="app run"><svg><use href="#word"/></svg></span><span class="app run"><svg><use href="#vlc"/></svg></span><span class="app run"><svg><use href="#ball"/></svg></span><span class="app run"><svg><use href="#swirl"/></svg></span><span class="app run"><svg><use href="#xround"/></svg></span><span class="app run"><svg><use href="#excel"/></svg></span><span class="app run"><svg><use href="#sheet"/></svg></span>
      <hr class="end">
      <svg><use href="#doc-dim"/></svg><svg><use href="#bin-dim"/></svg>
    </div>
  </section>
</main>
</body>
</html>
```
FILE: styles.css
```css
* { box-sizing: border-box; }
body { margin: 0; background: #000; font-family: Inter, "Liberation Sans", sans-serif; font-size: 24px; color: #ddd; }
p, h2, h3, ul, figure { margin: 0; padding: 0; }
ul { list-style: none; }
button { background: none; border: 0; padding: 0; font: inherit; color: inherit; }
svg { display: block; flex: none; overflow: visible; fill: currentColor; }
.defs { position: absolute; width: 0; height: 0; }

.stage { position: relative; min-height: 100vh; overflow: hidden; isolation: isolate; background: #000; }
.screen { position: absolute; inset: 0; overflow: hidden; }
.screen-one { background: #1c1c1c; }
.screen-two { background: #181818; mix-blend-mode: difference; }

/* menu bars */
.menubar { position: absolute; top: 0; left: 0; right: 0; height: 49px; display: flex; align-items: center; gap: 39px; padding: 0 38px 2px 44px; font-size: 26px; white-space: nowrap; }
.light-text { background: #242424; color: #e4e4e4; }
.dark-text { background: linear-gradient(90deg, #b4b4b4, #d4d4d4 40%, #d0d0d0 80%, #b8b8b8); color: #101010; }
.mark { width: 26px; height: 32px; margin-right: 6px; }
.tray { margin-left: auto; display: flex; align-items: center; gap: 37px; }
.tray svg { width: 32px; height: 32px; }
.tray .batt { width: 52px; height: 26px; margin: 0 -6px; }
.orb { width: 28px; height: 28px; margin-right: -4px; border-radius: 50%; background: #c4c4c4; }
.tray time { font-size: 25px; }

/* browser window */
.chrome { position: absolute; left: 10px; right: 0; top: 51px; bottom: 269px; background: #fff; border-radius: 20px; overflow: hidden; box-shadow: 0 40px 80px rgba(0,0,0,.66); display: flex; flex-direction: column; }
.tabstrip { height: 91px; flex: none; background: #202020; display: flex; align-items: flex-end; padding-left: 38px; }
.lights { display: flex; gap: 13px; }
.lights i { width: 27px; height: 27px; border-radius: 50%; background: #707070; }
.lights i:nth-child(2) { background: #929292; }
.lights i:nth-child(3) { background: #999; }
.tabstrip .lights { margin: 0 28px 20px 0; width: 122px; }
.tabs { flex: 1; min-width: 0; display: flex; height: 68px; }
.tab { flex: 1 1 0; min-width: 0; display: flex; align-items: center; gap: 16px; padding: 0 12px 0 14px; overflow: hidden; font-size: 25px; color: #a8a8a8; position: relative; }
.tab > svg { width: 32px; height: 32px; }
.tab span { flex: 1; overflow: hidden; white-space: nowrap; }
.tab::after { content: ""; position: absolute; right: 0; top: 14px; width: 2px; height: 38px; background: #555; }
.tab.active { background: #373737; border-radius: 16px 16px 0 0; gap: 26px; }
.tab.active::after { display: none; }
.tab.active button svg { width: 18px; height: 18px; }
.newtab { width: 162px; height: 68px; flex: none; display: flex; align-items: center; padding-left: 32px; }
.newtab svg { width: 24px; height: 24px; }
.toolbar { height: 72px; flex: none; background: #373737; display: flex; align-items: center; padding: 0 33px 0 30px; }
.toolbar > button { margin-right: 36px; }
.toolbar > button svg { width: 28px; height: 28px; }
.omnibox { flex: 1; height: 56px; border-radius: 28px; background: #212121; display: flex; align-items: center; padding: 0 22px 0 22px; }
.lock { width: 18px; height: 24px; }
.url { margin-left: 22px; font-size: 28px; color: #929292; white-space: nowrap; }
.url b { font-weight: 400; color: #e8e8e8; }
.star { width: 30px; height: 30px; margin-left: auto; }
.extensions { display: flex; gap: 32px; align-items: center; margin-left: 26px; }
.extensions span { position: relative; width: 32px; height: 32px; }
.extensions svg { width: 32px; height: 32px; }
.extensions .avatar { width: 44px; height: 44px; margin: -6px; }
.extensions .dots { width: 16px; }
.extensions b { position: absolute; left: 20px; top: 18px; height: 24px; min-width: 24px; padding: 0 4px; border-radius: 4px; background: #777; color: #eee; font: 500 20px/24px Inter, sans-serif; text-align: center; }
.extensions .low { background: #111; color: #eee; }
.extensions .blk { background: #b8b8b8; color: #fff; }
.extensions .wide { left: -8px; }
.bookmarks { height: 66px; flex: none; background: #373737; display: flex; align-items: center; gap: 34px; padding: 0 28px 10px; }
.bookmarks a { display: flex; align-items: center; gap: 16px; color: #f4f4f4; text-decoration: none; font-size: 24px; white-space: nowrap; }
.bookmarks svg { width: 32px; height: 32px; }
.webform { flex: 1; overflow: hidden; padding-left: 724px; font: 600 31px/40px "Open Sans", sans-serif; color: #000; }
.label { margin-top: -11px; }
.value { font-weight: 400; font-size: 32px; margin: 13px 0 44px 13px; }
.webform label { display: flex; align-items: center; gap: 10px; }
.webform em { font-style: normal; color: #555; }
.webform label svg { width: 40px; height: 40px; margin-left: 12px; }
.picker { position: relative; width: 598px; margin: 25px 0 44px -1px; }
.picker::after { content: "▼"; position: absolute; right: 26px; top: 18px; font: 22px/44px "DejaVu Sans", sans-serif; color: #666; }
.picker select { appearance: none; display: block; width: 100%; height: 80px; border: 4px solid #333; border-radius: 0; background: #fff; padding: 0 17px; font: 35px "DejaVu Sans Mono", monospace; color: #000; }

.popup { position: absolute; left: 716px; top: 637px; width: 1070px; padding: 10px 10px 11px; border: 1px solid #222; border-radius: 12px; background: linear-gradient(#636363, #686868 50%, #606060 80%, #484848 88%, #404040); box-shadow: 0 10px 50px rgba(0,0,0,.35); font-size: 32px; color: #f0f0f0; }
.popup button { display: block; width: 100%; height: 54px; padding-left: 37px; text-align: left; border-radius: 8px; position: relative; white-space: nowrap; }
.popup i { position: absolute; left: 6px; font: normal 28px/54px "DejaVu Sans", sans-serif; }
.popup .on { background: #a8a8a8; color: #fff; }

/* mail window */
.paper-edge { position: absolute; right: 0; width: 400px; top: 1500px; height: 245px; background: linear-gradient(90deg, #777, #d8d8d8); }
.mail { position: absolute; left: 8px; right: 32px; top: 49px; bottom: 105px; border-radius: 20px; background: #1c1c1c; overflow: hidden; display: flex; flex-direction: column; justify-content: flex-end; }
.mail-main { display: flex; height: 112px; }
.mail-side { width: 584px; border-right: 2px solid #444; display: flex; flex-direction: column; background: linear-gradient(#101010, #262626); }
.folder { height: 40px; overflow: hidden; display: flex; gap: 20px; padding: 20px 0 0 82px; color: #888; border-bottom: 2px solid #444; }
.folder svg { width: 30px; height: 24px; }
.mail-nav { display: flex; gap: 77px; padding: 16px 0 0 42px; }
.mail-nav svg { width: 40px; height: 40px; }
.with-badge { position: relative; }
.with-badge b { position: absolute; left: 30px; top: -20px; width: 28px; height: 34px; border-radius: 6px; background: #a0a0a0; color: #fff; text-align: center; font: 500 24px/34px Inter, sans-serif; }
.mail-list { width: 400px; background: #101010; padding: 16px 0 0 86px; color: #888; }
.mail-list p + p { margin-top: 24px; color: #ccc; }
.mail-body { flex: 1; background: #fff; color: #000; padding: 0 200px 0 0; text-align: right; font: 32px/37px "Liberation Sans", sans-serif; overflow: hidden; white-space: nowrap; }
.mail-body p:last-child { padding-right: 32px; }
.mail-status { height: 52px; flex: none; display: flex; align-items: center; gap: 42px; padding: 0 46px 0 56px; background: #1e1e1e; color: #d4d4d4; border-bottom: 4px solid #444; white-space: nowrap; }
.push { margin-left: auto; }
.peek { position: absolute; left: 0; right: 0; bottom: 99px; height: 8px; overflow: hidden; display: flex; justify-content: space-between; padding: 0 945px 0 137px; line-height: 16px; color: #999; }

/* spreadsheet window */
.excel { position: absolute; left: 0; right: 38px; top: 51px; bottom: 105px; border-radius: 20px; overflow: hidden; background: #1e1e1e; display: flex; flex-direction: column; }
.excel > div { padding-left: 2570px; }
.excel-title { height: 229px; background: #343434; display: flex; }
.excel-title svg { width: 28px; height: 28px; margin: 6px 0 0 218px; }
.notice { height: 73px; background: #f0f0f0; display: flex; align-items: center; justify-content: flex-end; padding-right: 16px; color: #111; }
.notice button { width: 150px; height: 38px; margin-top: 14px; border: 2px solid #bbb; border-radius: 6px; background: #fafafa; }
.formula { height: 54px; background: #262626; border-top: 2px solid #999; display: flex; align-items: center; justify-content: space-between; padding-right: 6px; }
.formula div { flex: 1; height: 38px; background: #393939; }
.formula span { margin-left: 8px; font: 18px "DejaVu Sans", sans-serif; color: #bbb; }
.heads { height: 52px; background: #171717; border-top: 6px solid #ddd; border-bottom: 4px solid #bbb; display: flex; align-items: center; color: #999; text-align: center; }
.heads span { flex: none; height: 100%; line-height: 42px; width: 130px; border-right: 2px solid #555; }
.heads span:first-child { width: 90px; padding-right: 56px; text-align: right; }
.heads span:nth-child(2) { color: #fff; font-weight: 500; }
.grid { flex: 1; background: repeating-linear-gradient(#fff 0 30px, #d0d0d0 30px 32px); display: flex; }
.grid i { flex: none; width: 130px; border-right: 2px solid #d0d0d0; }
.grid i:first-child { width: 90px; }
.grid i:last-child { border: 0; }
.below { height: 45px; background: #262626; }
.excel-status { height: 52px; background: #111; display: flex; align-items: center; gap: 20px; padding: 12px 40px 0 87px; color: #777; white-space: nowrap; border-bottom: 3px solid #111; }
.view-icons { margin-left: auto; display: flex; gap: 44px; }
.view-icons svg { width: 28px; height: 28px; }
.excel-status i { font-style: normal; }
.minus { margin-left: 20px; }
.excel-status input { appearance: none; width: 200px; height: 8px; background: #3a3a3a; }
.excel-status input::-webkit-slider-thumb { appearance: none; width: 30px; height: 30px; border-radius: 50%; background: #444; }

/* document viewer window */
.viewer { position: absolute; left: 8px; right: 293px; top: 55px; bottom: 166px; border-radius: 20px; overflow: hidden; display: flex; background: #181818; box-shadow: 0 20px 80px rgba(0,0,0,.6); }
.thumbs { width: 413px; flex: none; border-right: 2px solid #000; background: radial-gradient(ellipse at 0 20%, #303030, #373737 30%, #4b4b4b 90%); display: flex; flex-direction: column; }
.thumbs .lights { padding: 34px 0 0 40px; }
.thumbs h2 { font-size: 25px; font-weight: 500; line-height: 30px; color: #707070; margin: 60px 0 12px 32px; }
.strip { flex: 1; min-height: 0; overflow: hidden; display: flex; flex-direction: column; justify-content: flex-end; padding-bottom: 66px; }
figure { height: 556px; flex: none; padding: 26px 20px 0; margin: 0 28px; }
figure.selected { height: 486px; background: #626262; border-radius: 10px; }
figcaption { text-align: center; padding-top: 33px; color: #e4e4e4; line-height: 30px; }
.thumb { width: 304px; margin-left: 6px; height: 432px; border-radius: 6px; background: #fff; color: #000; overflow: hidden; position: relative; padding: 24px 32px 0 33px; font: 5px/6px "DejaVu Sans", sans-serif; white-space: nowrap; }
.selected .thumb { padding-top: 26px; }
.t5 { padding-top: 220px; }
.thumb .top { display: flex; gap: 128px; margin: 0 0 18px -20px; font: 4px/6px "Liberation Serif", serif; }
.thumb h3 { font-size: 8px; line-height: 12px; margin: 4px 0; }
.thumb h3.ruled { border-bottom: 1px solid #aaa; margin: 6px 0; line-height: 11px; }
.thumb h3.tight { margin: 0; }
.thumb h3.roomy { margin: 7px 0; }
.thumb h3 b { font-size: 5px; }
.gap { padding-top: 4px; }
.row { display: flex; justify-content: space-between; width: 202px; }
.row b { font-weight: 400; }
.row.w { width: 241px; }
.row.n { width: 193px; }
.row.n span { width: 142px; overflow: hidden; }
.row.line { border-top: 1px solid #888; margin-top: 2px; }
.row u { align-self: flex-end; width: 62px; height: 1px; background: #000; }
.selected .row { line-height: 7px; }
.selected .thumb h3.ruled { margin: 7px 0; }
.sign { display: flex; line-height: 6px; }
.sign span { width: 30px; }
.sign u { flex: 1; height: 1px; margin-top: 5px; background: #777; }
.foot { position: absolute; left: 13px; right: 13px; bottom: 22px; display: flex; justify-content: space-between; font: 5px/6px "Liberation Serif", serif; }
.viewer-main { flex: 1; min-width: 0; display: flex; flex-direction: column; }
.viewer-bar { height: 108px; flex: none; display: flex; align-items: flex-start; background: #202020; border-bottom: 2px solid #555; padding: 27px 27px 0 38px; color: #8c8c8c; font-size: 22px; }
.tool { display: flex; flex-direction: column; align-items: center; gap: 14px; padding-top: 3px; margin-right: 32px; line-height: 26px; }
.tool svg { width: 30px; height: 30px; }
.tool.view { align-items: flex-start; }
.tool.view svg { width: 60px; }
.title { display: flex; flex-direction: column; margin: 0 auto 0 -10px; color: #8c8c8c; font-size: 24px; line-height: 30px; }
.title b { font-size: 26px; color: #e8e8e8; font-weight: 600; }
.zoom { margin-right: 51px; }
.share { margin-right: 52px; }
.highlight { margin-right: 36px; }
.highlight svg { width: 90px; }
.markup { margin-right: 21px; }
.tool.zoom svg { width: 112px; }
.find { width: 648px; height: 43px; margin-top: -4px; border: 2px solid #2c2c2c; border-radius: 10px; display: flex; align-items: center; gap: 10px; padding: 0 12px; }
.find svg { width: 28px; height: 28px; }
.find input { flex: 1; border: 0; background: none; font: 25px Inter, sans-serif; color: #888; padding: 0; }
.find input::placeholder { color: #666; }
.viewer-body { flex: 1; min-height: 0; overflow: hidden; padding: 0 29px 0 28px; background: #181818; }
.page { background: #fff; color: #000; height: 100%; overflow: hidden; padding: 142px 224px 0 228px; font: 34px/40px "DejaVu Sans", sans-serif; white-space: nowrap; }
.page header { display: flex; font: 27px/34px "Liberation Serif", serif; margin: 0 0 128px -136px; }
.ptitle { margin-left: 896px; }
.para { margin-top: 24px; }
.page table { border-collapse: collapse; margin-top: 25px; width: 1404px; }
.page td, .page th { padding: 2px 0; text-align: left; vertical-align: top; font-size: 34px; line-height: 40px; }
.page td:last-child { width: 428px; vertical-align: middle; }
.page td.num { text-align: right; }
.page u { display: block; border-bottom: 2px solid #000; margin-top: 29px; }
.page h2 { font-size: 51px; line-height: 60px; margin: 42px 0 46px; border-bottom: 2px solid #888; }

/* notification */
.toast { position: absolute; right: 32px; top: 82px; width: 688px; height: 221px; border-radius: 18px; border: 2px solid #606060; background: radial-gradient(ellipse 60% 110% at 20% 100%, #7a7a7a 30%, #3c3c3c); box-shadow: 0 8px 30px rgba(0,0,0,.3); padding: 14px 20px; display: flex; flex-direction: column; color: #dedede; font-size: 26px; line-height: 32px; white-space: nowrap; }
.toast-head { display: flex; align-items: center; gap: 12px; height: 42px; font-size: 23px; color: #c8c8c8; }
.toast-head svg { width: 36px; height: 32px; margin-left: -4px; }
.toast-head time { margin-left: auto; font-size: 24px; }
.toast b { font-weight: 600; margin-top: 2px; line-height: 38px; }
.toast p { margin-top: 5px; font-size: 25px; }

/* docks */
.dock { position: absolute; left: 55px; right: 54px; bottom: 10px; height: 90px; border-radius: 20px; display: flex; gap: 17px; padding: 14px 0 0 13px; }
.dock-one { background: linear-gradient(90deg, #343434 60%, #585858 75%, #686868); }
.dock-two { background: #202020; }
.dock svg { width: 54px; height: 56px; }
.dock-two svg { width: 56px; }
.dock text { font-family: Inter, sans-serif; }
.app { position: relative; flex: none; height: 56px; }
.app b { position: absolute; right: -10px; top: -6px; width: 22px; height: 22px; border-radius: 50%; background: #606060; color: #eee; font: 500 16px/22px Inter, sans-serif; text-align: center; }
.run::after { content: ""; position: absolute; left: 50%; top: 64px; width: 7px; height: 7px; margin-left: -4px; border-radius: 50%; background: #aaa; }
.dock hr { width: 2px; height: 64px; flex: none; border: 0; margin: -4px 6px 0 8px; background: #888; }
.dock-one .end { margin: -4px 3px 0; }
.dock-two hr { margin: -4px 5px 0 4px; }
.dock-two .end { margin: -4px 1px 0 14px; }
```
